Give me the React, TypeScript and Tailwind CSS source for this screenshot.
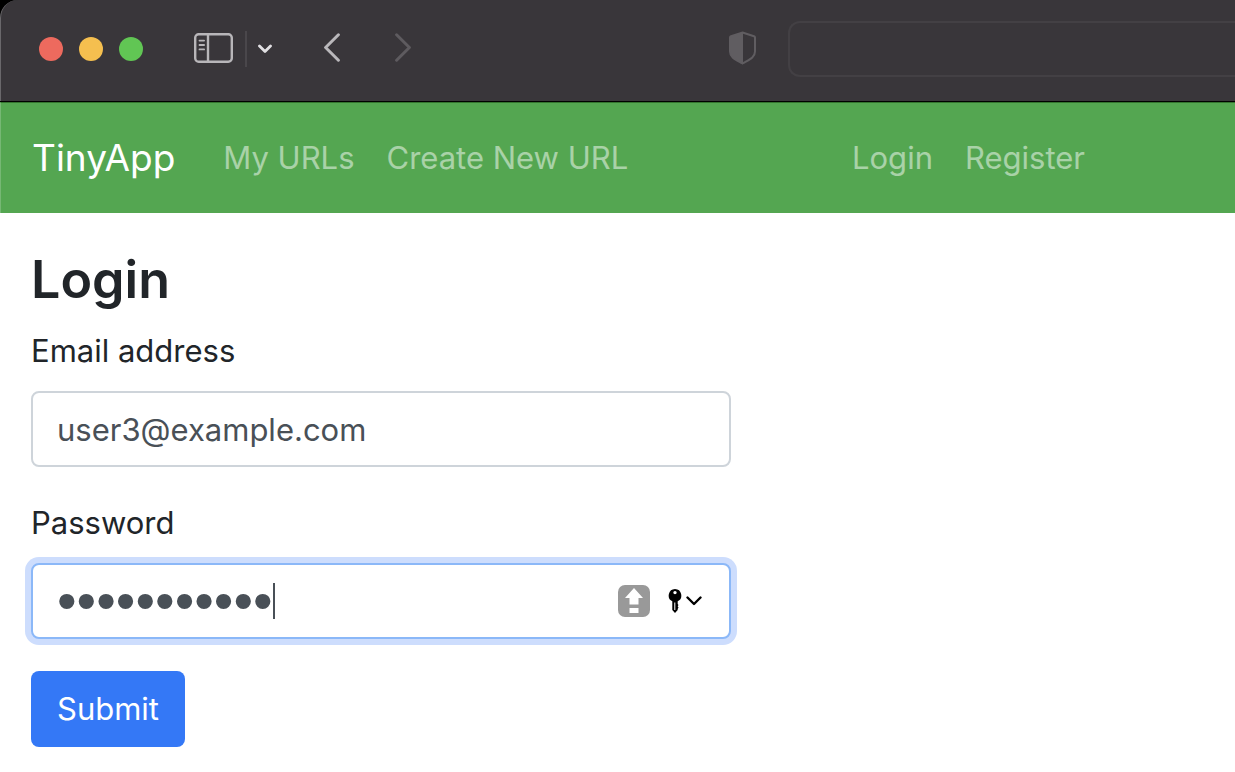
import React, { useState } from "react";

function BrowserBar() {
  return (
    <div className="bg-black">
      <header className="flex h-[101px] items-center rounded-tl-[18px] border-l border-[#6a686b] bg-[#39363a] pb-1.5">
        <div className="mt-0.5 ml-[38px] flex shrink-0 gap-4">
          <button aria-label="Close window" className="size-6 rounded-full bg-[#ed6a5e]" />
          <button aria-label="Minimize window" className="size-6 rounded-full bg-[#f5bf4f]" />
          <button aria-label="Zoom window" className="size-6 rounded-full bg-[#61c654]" />
        </div>
        <button aria-label="Show sidebar" className="ml-[51px] shrink-0">
          <svg width="39" height="30" viewBox="0 0 39 30" fill="none" stroke="#b8b6b9">
            <rect x="1.200" y="1.200" width="36.600" height="27.600" rx="3.500" strokeWidth="2.400" />
            <path d="M14 1v28" strokeWidth="2.400" />
            <path d="M5.500 7.600h4.600M5.500 12h4.600M5.500 16.400h4.600" strokeWidth="1.800" strokeLinecap="round" />
          </svg>
        </button>
        <div className="mt-0.5 ml-3 h-9 w-0.5 shrink-0 bg-[#4a474b]" />
        <button aria-label="Tab groups" className="mt-0.5 ml-[11px] shrink-0">
          <svg width="14" height="10" viewBox="0 0 14 10" fill="none" stroke="#e2e0e3" strokeWidth="2.8" strokeLinecap="round" strokeLinejoin="round">
            <path d="M1.500 2L7 7.500 12.500 2" />
          </svg>
        </button>
        <button aria-label="Back" className="ml-[52px] shrink-0">
          <svg width="16" height="29" viewBox="0 0 16 29" fill="none" stroke="#bab8bb" strokeWidth="3" strokeLinecap="round" strokeLinejoin="round">
            <path d="M14.400 1.800L1.600 14.500 14.400 27.200" />
          </svg>
        </button>
        <button aria-label="Forward" className="ml-[55px] shrink-0" disabled>
          <svg width="16" height="29" viewBox="0 0 16 29" fill="none" stroke="#5e5b5f" strokeWidth="3" strokeLinecap="round" strokeLinejoin="round">
            <path d="M1.600 1.800L14.400 14.500 1.600 27.200" />
          </svg>
        </button>
        <button aria-label="Privacy report" className="ml-auto shrink-0">
          <svg width="28" height="34" viewBox="0 0 28 34" fill="none">
            <path d="M13.500 1.500L25 5.200Q26 5.500 26 6.600V20.500C26 26.500 20.500 28.500 13.500 32.500C6.500 28.500 1 26.500 1 20.500V6.600Q1 5.500 2 5.200Z" stroke="#605d61" strokeWidth="2" />
            <path d="M14 1.500V32.200L13.500 32.500C6.500 28.500 1 26.500 1 20.500V6.600Q1 5.500 2 5.200L13.500 1.500Z" fill="#605d61" />
          </svg>
        </button>
        <input
          aria-label="Address"
          className="mt-0.5 ml-[31px] h-14 w-[447px] shrink-0 rounded-l-[12px] border-2 border-r-0 border-[#434044] bg-transparent px-4 text-white outline-none"
        />
      </header>
    </div>
  );
}

function NavBar() {
  const link = "text-[31px] leading-[48px] text-white/50 hover:text-white/75";
  return (
    <nav className="border-t border-black bg-[#54a651]">
      <div className="flex h-[111px] items-center border-t border-l border-t-[#34752f] border-l-[#76b874] pr-[150px] pl-[31px] whitespace-nowrap">
        <a href="#home" className="mr-12 text-[37px] leading-[60px] text-white">TinyApp</a>
        <div className="flex gap-8">
          <a href="#urls" className={link}>My URLs</a>
          <a href="#new" className={link}>Create New URL</a>
        </div>
        <div className="ml-auto flex gap-8">
          <a href="#login" className={link}>Login</a>
          <a href="#register" className={link}>Register</a>
        </div>
      </div>
    </nav>
  );
}

export default function App() {
  const [email, setEmail] = useState("user3@example.com");
  const [password, setPassword] = useState("tinyapp-pw3");
  const field = "block h-[76px] w-full rounded-lg border-2 bg-white px-6 text-[#495057] outline-none";
  const label = "mb-4 block text-[31px] leading-[48px]";
  return (
    <div className="min-h-screen bg-white font-['Inter',sans-serif] text-[#212529]">
      <BrowserBar />
      <NavBar />
      <main className="px-[31px] pt-[34px] pb-6">
        <h1 className="mb-[14px] text-[52px] leading-[66px] font-semibold">Login</h1>
        <form className="max-w-[700px]" onSubmit={(e) => e.preventDefault()}>
          <label htmlFor="email" className={label}>Email address</label>
          <input
            id="email"
            type="email"
            value={email}
            onChange={(e) => setEmail(e.target.value)}
            className={`${field} mb-8 border-[#ced4da] text-[31px]`}
          />
          <label htmlFor="password" className={label}>Password</label>
          <div className="relative mb-8">
            <input
              id="password"
              type="password"
              value={password}
              onChange={(e) => setPassword(e.target.value)}
              className={`${field} border-[#8bb8f8] pr-32 font-['Liberation_Sans',sans-serif] text-[56px] caret-transparent ring-6 ring-[#cdddfd]`}
            />
            <span className="absolute top-5 left-[242px] h-9 w-0.5 bg-[#495057]" />
            <div className="absolute inset-y-0 right-[29px] flex items-center">
              <button type="button" aria-label="Fill password" className="mr-[18px]">
                <svg width="32" height="32" viewBox="0 0 32 32">
                  <rect width="32" height="32" rx="7" fill="#999" />
                  <path d="M16 3L25 13H20.500V19.500H11.500V13H7ZM11.500 23h9v5h-9z" fill="#fff" />
                </svg>
              </button>
              <button type="button" aria-label="Saved passwords" className="flex items-center gap-1">
                <svg width="14" height="24" viewBox="0 0 14 24">
                  <path fillRule="evenodd" d="M7 0A6.500 6.500 0 0 1 9.700 12.300V15L10.500 16 9.700 17.200 10.500 18.500 9.700 20V21L7 24 4.300 21V12.300A6.500 6.500 0 0 1 7 0ZM7 1.900A1.700 1.700 0 1 0 7 5.300 1.700 1.700 0 0 0 7 1.900ZM6.300 13.500V21H7.300V13.500Z" fill="#000" />
                </svg>
                <svg width="16" height="10" viewBox="0 0 16 10" fill="none" stroke="#000" strokeWidth="2.4" strokeLinecap="round" strokeLinejoin="round">
                  <path d="M1.500 1.500L8 8 14.500 1.500" />
                </svg>
              </button>
            </div>
          </div>
          <button type="submit" className="h-[76px] rounded-lg bg-[#3478f6] px-[26px] text-[31px] leading-[48px] text-white">
            Submit
          </button>
        </form>
      </main>
    </div>
  );
}
